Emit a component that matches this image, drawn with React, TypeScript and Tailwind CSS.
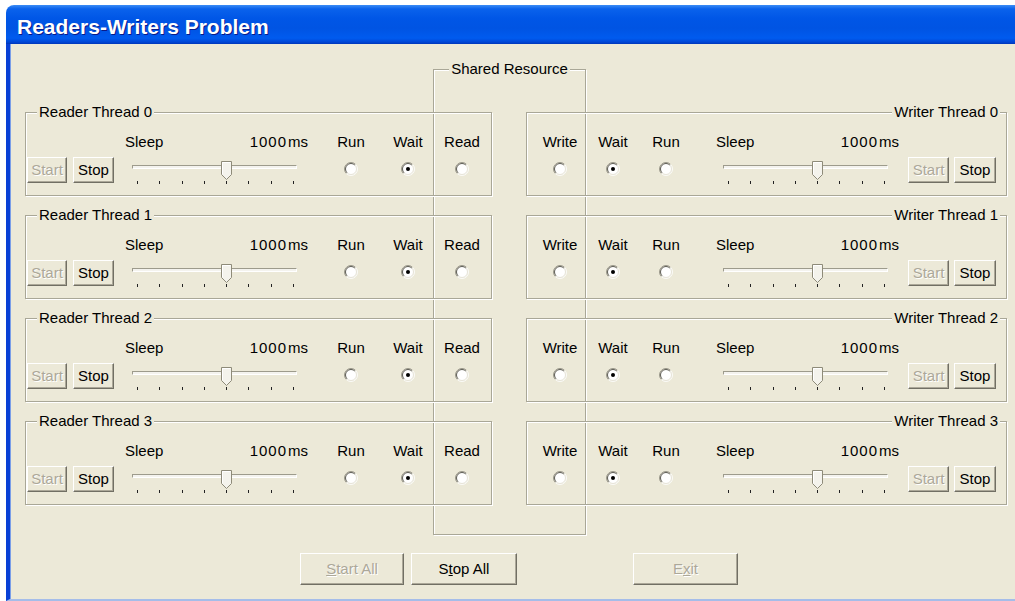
import type { ReactNode } from "react";

const ticks = [0, 1, 2, 3, 4, 5, 6, 7];
const threads = [0, 1, 2, 3];

function Radio({ checked = false }: { checked?: boolean }) {
  return (
    <svg width="14" height="14" viewBox="0 0 14 14">
      <circle cx="7" cy="7" r="6" fill="#fff" />
      <path d="M2.4 11.6A6.5 6.5 0 0 1 11.6 2.4" fill="none" stroke="#9a978a" />
      <path d="M11.6 2.4A6.5 6.5 0 0 1 2.4 11.6" fill="none" stroke="#fbfbf8" />
      <path d="M3.11 10.89A5.5 5.5 0 0 1 10.89 3.11" fill="none" stroke="#5c5b52" />
      <path d="M10.89 3.11A5.5 5.5 0 0 1 3.11 10.89" fill="none" stroke="#e6e3d7" />
      {checked && <circle cx="7" cy="7" r="2" fill="#000" />}
    </svg>
  );
}

function Thumb() {
  return (
    <svg width="11" height="19" viewBox="0 0 11 19">
      <path d="M0.5 0.5H10.5V13.5L5.5 18.5L0.5 13.5Z" fill="#f4f3ec" stroke="#8e8b79" />
      <path d="M1.5 13V1.5H9.5" fill="none" stroke="#fff" />
    </svg>
  );
}

function Slider() {
  return (
    <div className="relative ml-[7px] mt-[5px] w-[165px]">
      <div className="mt-[8px] h-[4px] border border-[#9d9b8c] border-b-white border-r-white bg-[#f4f3ee]" />
      <div className="mt-[12px] flex justify-between pl-[5px] pr-[3px]">
        {ticks.map((t) => (
          <div key={t} className="h-[3px] w-px bg-[#222]" />
        ))}
      </div>
      <div className="absolute left-[89px] top-[4px] flex">
        <Thumb />
      </div>
    </div>
  );
}

function Button({ children, disabled = false, className = "" }: { children: ReactNode; disabled?: boolean; className?: string }) {
  return (
    <button
      type="button"
      className={`flex items-center justify-center border border-white border-b-[#716f64] border-r-[#716f64] bg-[#ece9d8] leading-[20px] shadow-[inset_-1px_-1px_0_#aca899] ${
        disabled ? "text-[#aca899] [text-shadow:1px_1px_0_#fff]" : "text-black"
      } ${className}`}
    >
      {children}
    </button>
  );
}

function RadioColumn({ label, checked = false, className = "" }: { label: string; checked?: boolean; className?: string }) {
  return (
    <div className={`flex w-[40px] flex-col items-center ${className}`}>
      <div className="mt-[19px] h-[20px] whitespace-nowrap leading-[20px]">{label}</div>
      <div className="mt-[10px] flex">
        <Radio checked={checked} />
      </div>
    </div>
  );
}

function SleepColumn({ className = "" }: { className?: string }) {
  return (
    <div className={`flex w-[183px] flex-col ${className}`}>
      <div className="mt-[19px] flex h-[20px] items-center justify-between leading-[20px]">
        <span>Sleep</span>
        <span>
          <span className="tracking-[1px]">1000</span>
          <span className="ml-px">ms</span>
        </span>
      </div>
      <Slider />
    </div>
  );
}

function GroupBox({ children, className = "" }: { children: ReactNode; className?: string }) {
  return (
    <div className={`relative flex h-[84px] items-start border border-[#a9a797] shadow-[1px_1px_0_#fff,inset_1px_1px_0_#fff] ${className}`}>
      {children}
    </div>
  );
}

function ReaderBox({ id }: { id: number }) {
  return (
    <GroupBox className="w-[467px]">
      <span className="absolute -top-[11px] left-[11px] bg-[#ece9d8] px-[2px] leading-[20px]">Reader Thread {id}</span>
      <div className="ml-px mt-[44px] flex gap-[6px]">
        <Button disabled className="h-[26px] w-[40px]">Start</Button>
        <Button className="h-[26px] w-[41px]">Stop</Button>
      </div>
      <SleepColumn className="ml-[11px]" />
      <RadioColumn label="Run" className="ml-[23px]" />
      <RadioColumn label="Wait" checked className="ml-[17px]" />
      <RadioColumn label="Read" className="ml-[14px]" />
    </GroupBox>
  );
}

function WriterBox({ id }: { id: number }) {
  return (
    <GroupBox className="w-[481px]">
      <span className="absolute -top-[11px] right-[6px] bg-[#ece9d8] px-[2px] leading-[20px]">Writer Thread {id}</span>
      <RadioColumn label="Write" className="ml-[13px]" />
      <RadioColumn label="Wait" checked className="ml-[13px]" />
      <RadioColumn label="Run" className="ml-[13px]" />
      <SleepColumn className="ml-[30px]" />
      <div className="ml-[9px] mt-[44px] flex gap-[5px]">
        <Button disabled className="h-[26px] w-[41px]">Start</Button>
        <Button className="h-[26px] w-[42px]">Stop</Button>
      </div>
    </GroupBox>
  );
}

export default function App() {
  return (
    <div className="h-[601px] w-[1015px] overflow-hidden bg-white pl-[6px] pt-[5px] font-['Liberation_Sans',Arial,sans-serif] text-[15px] text-black">
      <div className="flex h-[596px] w-[1040px] flex-col overflow-hidden rounded-tl-[8px]">
        <div className="flex h-[39px] items-center bg-[linear-gradient(180deg,#3b8cf5_0%,#0a62ec_10%,#0056e6_35%,#0054e3_60%,#005bef_85%,#0046d6_95%,#0036b8_100%)] pl-[11px] pt-[4px]">
          <span className="text-[21px] font-bold text-white [text-shadow:1px_1px_0_#0a1a88]">Readers-Writers Problem</span>
        </div>

        <div className="relative flex-1 border-b-2 border-l-4 border-b-[#a5bde9] border-l-[#0840d6] bg-[#ece9d8] pl-[15px] pt-[68px] shadow-[inset_1px_0_0_#7a9ee8]">
          {/* shared resource frame drawn across the reader/writer columns */}
          <div className="absolute left-[423px] top-[25px] h-[466px] w-[153px] border border-[#a9a797] shadow-[1px_1px_0_#fff,inset_1px_1px_0_#fff]">
            <div className="absolute -top-[11px] left-0 right-0 flex justify-center">
              <span className="bg-[#ece9d8] px-[2px] leading-[20px]">Shared Resource</span>
            </div>
          </div>

          <div className="flex flex-col gap-[19px]">
            {threads.map((id) => (
              <div key={id} className="flex gap-[34px]">
                <ReaderBox id={id} />
                <WriterBox id={id} />
              </div>
            ))}
          </div>

          <div className="mt-[48px] flex pl-[275px]">
            <Button disabled className="h-[32px] w-[104px]">
              <span className="underline">S</span>tart All
            </Button>
            <Button className="ml-[7px] h-[32px] w-[106px]">
              S<span className="underline">t</span>op All
            </Button>
            <Button disabled className="ml-[116px] h-[32px] w-[105px]">
              E<span className="underline">x</span>it
            </Button>
          </div>
        </div>
      </div>
    </div>
  );
}
